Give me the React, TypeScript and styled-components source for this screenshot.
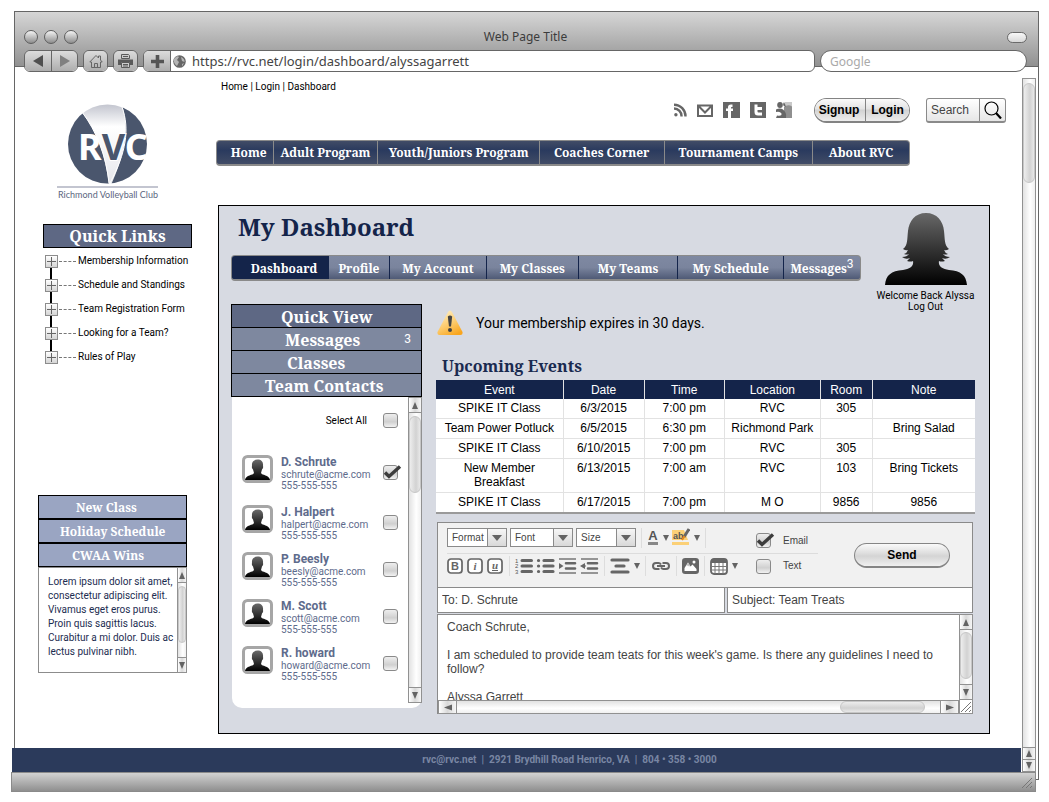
import React from "react";
import styled, { createGlobalStyle, css } from "styled-components";

const serif = `"Droid Serif", "Noto Serif", "DejaVu Serif Condensed", "DejaVu Serif", serif`;
const roboto = `Roboto, "Liberation Sans", sans-serif`;
const arial = `"Liberation Sans", Arial, sans-serif`;
const ui = `"Noto Sans", "DejaVu Sans", sans-serif`;

const GlobalStyle = createGlobalStyle`
  *, *::before, *::after { box-sizing: border-box; }
  body { margin: 0; background: #fff; color: #000; font: 10px/12px ${roboto}; }
  h1, h2, h3, p, ul, ol { margin: 0; padding: 0; }
  ul, ol { list-style: none; }
  a { color: inherit; text-decoration: none; }
  button, input, select, textarea { margin: 0; padding: 0; font: inherit; color: inherit; }
  button { cursor: pointer; }
  svg { display: block; flex: none; }
`;

/* ---------- browser window ---------- */

const Page = styled.div`
  padding: 11px 10px 10px 11px;
`;

const Window = styled.div`
  margin-left: 3px;
  border: 1px solid #666;
  padding-bottom: 7px;
`;

const Chrome = styled.header`
  height: 60px;
  display: flex;
  flex-direction: column;
  justify-content: space-between;
  padding-top: 16px;
  background:
    linear-gradient(#666, #666) 0 54px / 100% 1px no-repeat,
    linear-gradient(#d6d6d6, #919191) 0 0 / 100% 54px no-repeat;
`;

const TitleRow = styled.div`
  display: grid;
  grid-template-columns: 1fr auto 1fr;
  align-items: center;
  height: 16px;
  padding: 0 11px 0 9px;
  font: 12px/18px ${ui};
  color: #3c3c3c;
`;

const Lights = styled.div`
  display: flex;
  gap: 6px;
`;

const Light = styled.button`
  width: 14px;
  height: 14px;
  border: 1px solid #5e5e5e;
  border-radius: 50%;
  background: linear-gradient(#f4f4f4, #8d8d8d);
`;

const Pill = styled.button`
  justify-self: end;
  width: 20px;
  height: 11px;
  border: 1px solid #6a6a6a;
  border-radius: 6px;
  background: linear-gradient(#f8f8f8, #d8d8d8);
`;

const ToolRow = styled.div`
  display: flex;
  gap: 5px;
  padding: 0 11px 0 9px;
`;

const ChromeGroup = styled.div`
  display: flex;
  height: 22px;
  border: 1px solid #666;
  border-radius: 6px;
  overflow: hidden;
`;

const ChromeButton = styled.button<{ $divided?: boolean }>`
  display: grid;
  place-items: center;
  width: ${(p) => (p.$divided ? 26 : 23)}px;
  border: 0;
  background: linear-gradient(#dcdcdc, #adadad);
  & + & { border-left: 1px solid #666; }
`;

const AddressBar = styled(ChromeGroup)`
  flex: 1;
  background: #fff;
`;

const AddressLabel = styled.label`
  flex: 1;
  display: flex;
  align-items: center;
  gap: 6px;
  padding-left: 2px;
  border-left: 1px solid #666;
`;

const AddressInput = styled.input`
  flex: 1;
  border: 0;
  outline: 0;
  background: none;
  font: 13px/18px ${ui};
  color: #444;
`;

const GoogleInput = styled.input`
  width: 207px;
  height: 22px;
  border: 1px solid #666;
  border-radius: 11px;
  padding: 0 9px;
  outline: 0;
  font: 12px/18px ${ui};
  &::placeholder { color: #aaa; opacity: 1; }
`;

const Viewport = styled.div`
  display: flex;
  padding-right: 2px;
`;

const Site = styled.div`
  flex: 1;
  min-width: 0;
  display: flex;
  flex-direction: column;
`;

const SiteColumns = styled.div`
  display: flex;
`;

const Footer = styled.footer`
  position: relative;
  margin: 14px 1px 0 -3px;
  height: 24px;
  background: #2b3a5b;
  color: #7986a3;
  font: bold 10px/23px ${roboto};
  text-align: center;
  padding-left: 106px;
`;

const StatusBar = styled.div`
  position: relative;
  display: flex;
  justify-content: flex-end;
  align-items: flex-end;
  margin: -8px 3px 0 0;
  height: 20px;
  padding: 0 2px 2px 0;
  border: 1px solid #8a8a8a;
  background: linear-gradient(#d2d2d2, #8f8f8f);
`;

/* ---------- scroll bars ---------- */

const Bar = styled.div<{ $row?: boolean; $size: number }>`
  flex: none;
  display: flex;
  flex-direction: ${(p) => (p.$row ? "row" : "column")};
  ${(p) => (p.$row ? "height" : "width")}: ${(p) => p.$size}px;
  border: 1px solid #919191;
  background: linear-gradient(${(p) => (p.$row ? "180deg" : "90deg")}, #e2e2e2, #fff 60%, #f0f0f0);
`;

const BarButton = styled.button<{ $row?: boolean }>`
  flex: none;
  display: grid;
  place-items: center;
  ${(p) => (p.$row ? "width" : "height")}: ${(p) => (p.$row ? 18 : 15)}px;
  border: 0 solid #919191;
  background: linear-gradient(90deg, #fff, #d9d9d9 50%, #f6f6f6);
  ${(p) => (p.$row
    ? css`&:first-child { border-right-width: 1px; } &:last-child { border-left-width: 1px; }`
    : css`&:first-child { border-bottom-width: 1px; } &:last-child { border-top-width: 1px; }`)}
`;

const Track = styled.div<{ $row?: boolean; $end?: boolean; $pad: number }>`
  flex: 1;
  display: flex;
  flex-direction: ${(p) => (p.$row ? "row" : "column")};
  justify-content: ${(p) => (p.$end ? "flex-end" : "flex-start")};
  ${(p) => (p.$row ? `padding: 0 ${p.$pad}px` : `padding: ${p.$pad}px 0`)};
`;

const Thumb = styled.div<{ $row?: boolean; $length: number }>`
  ${(p) => (p.$row ? "width" : "height")}: ${(p) => p.$length}px;
  ${(p) => (p.$row ? "align-self: stretch" : "width: 100%")};
  border: 1px solid #c6c6c6;
  border-radius: 7px;
  background: linear-gradient(${(p) => (p.$row ? "180deg" : "90deg")}, #ededed, #d2d2d2 60%, #e8e8e8);
`;

const arrows = {
  up: "M4 1 7 8H1Z",
  down: "M4 8 1 1H7Z",
  left: "M0 4.5 8 1.500V7.500Z",
  right: "M8 4.500 0 1.500V7.500Z",
};

const Arrow = ({ to }: { to: keyof typeof arrows }) => (
  <svg width="8" height="9" viewBox="0 0 8 9" aria-hidden="true">
    <path d={arrows[to]} fill="#636363" />
  </svg>
);

const VerticalBar = ({ size = 14, pad = 3, thumb }: { size?: number; pad?: number; thumb: number }) => (
  <Bar $size={size}>
    <BarButton type="button" aria-label="Scroll up"><Arrow to="up" /></BarButton>
    <Track $pad={pad}><Thumb $length={thumb} /></Track>
    <BarButton type="button" aria-label="Scroll down"><Arrow to="down" /></BarButton>
  </Bar>
);

const PageBar = styled(Bar)`
  margin-top: 6px;
`;

const PageBarButton = styled(BarButton)`
  height: 12px;
  border-top-width: 1px;
`;

const Grip = () => (
  <svg width="12" height="12" viewBox="0 0 12 12" stroke="#777" aria-hidden="true">
    <path d="M1 11 11 1M5 11 11 5M9 11l2-2" />
  </svg>
);

/* ---------- sidebar ---------- */

const Sidebar = styled.aside`
  flex: none;
  width: 201px;
  padding: 31px 0 0 23px;
`;

const LogoLink = styled.a`
  display: block;
  margin-left: 17px;
`;

const QuickTitle = styled.h2`
  margin: 20px 0 0 5px;
  width: 149px;
  border: 1px solid #000;
  background: #5e6884;
  color: #fff;
  font: bold 16px/22px ${serif};
  text-align: center;
`;

const Tree = styled.ul`
  margin: 1px 0 0 7px;
  background: linear-gradient(#000, #000) 5px 12px / 2px calc(100% - 24px) no-repeat;
`;

const TreeItem = styled.li`
  display: flex;
  align-items: center;
  height: 24px;
`;

const Expand = styled.button`
  display: grid;
  place-items: center;
  width: 13px;
  height: 13px;
  border: 1px solid #8c8c8c;
  background: linear-gradient(#fff, #d5d5d5);
`;

const Dash = styled.span`
  width: 17px;
  margin: 0 2px 0 1px;
  border-top: 1px dashed #777;
`;

const News = styled.section`
  width: 149px;
  margin-top: 126px;
`;

const NewsTab = styled.button<{ $inset: number }>`
  display: block;
  width: 100%;
  height: 24px;
  border: 1px solid #000;
  background: #9aa5c2;
  color: #fff;
  padding: 1px 0 0 ${(p) => p.$inset}px;
  font: bold 12px/21px ${serif};
  text-align: left;
`;

const NewsBox = styled.div`
  display: flex;
  height: 106px;
  border: 1px solid #8c8c8c;
`;

const NewsText = styled.p`
  flex: 1;
  padding: 7px 0 0 9px;
  font: 10px/14px ${roboto};
  color: #1c2c50;
  white-space: pre;
`;

const NewsBar = styled.div`
  display: flex;
  margin: -1px -1px -1px 0;
`;

/* ---------- site header ---------- */

const Main = styled.main`
  flex: 1;
  min-width: 0;
  padding-top: 9px;
`;

const Breadcrumb = styled.nav`
  margin-left: 5px;
`;

const Utilities = styled.div`
  display: flex;
  justify-content: flex-end;
  align-items: center;
  gap: 16px;
  height: 26px;
  margin-top: 4px;
  padding-right: 16px;
`;

const Social = styled.div`
  display: flex;
  align-items: center;
  gap: 10px;
  margin-right: 5px;
`;

const Account = styled.div`
  display: flex;
  height: 25px;
  border: 1px solid #838383;
  border-bottom-width: 2px;
  border-radius: 13px;
  overflow: hidden;
`;

const AccountButton = styled.button`
  width: 50px;
  padding-right: 2px;
  border: 0;
  background: linear-gradient(#fafafa, #e3e3e3 45%, #d2d2d2 50%, #ededed);
  font: bold 12px/20px ${arial};
  & + & { width: 44px; padding: 0; border-left: 1px solid #838383; }
`;

const Search = styled.form`
  display: flex;
  width: 80px;
  height: 25px;
  border: 1px solid #8a8a8a;
  border-bottom-width: 2px;
  border-radius: 3px;
  background: linear-gradient(#fff, #e6e6e6);
`;

const SearchInput = styled.input`
  flex: 1;
  min-width: 0;
  border: 0;
  padding-left: 4px;
  background: none;
  font: 12px/20px ${arial};
  &::placeholder { color: #444; opacity: 1; }
`;

const SearchButton = styled.button`
  display: grid;
  place-items: center;
  width: 26px;
  border: 0;
  border-left: 1px solid #8a8a8a;
  background: none;
`;

const Nav = styled.nav`
  display: flex;
  height: 26px;
  margin: 17px 112px 0 0;
  border: 1px solid #8a8a8a;
  border-bottom-width: 2px;
  border-radius: 4px;
  background: linear-gradient(#414c66, #2a3a5e 40%, #414c66);
`;

const NavLink = styled.a<{ $grow: number }>`
  flex: ${(p) => p.$grow} 1 0;
  color: #fff;
  font: bold 12px/23px ${serif};
  text-align: center;
  white-space: nowrap;
  & + & { border-left: 1px solid #8a8a8a; }
  &:first-child { padding-left: 8px; }
`;

/* ---------- dashboard ---------- */

const Panel = styled.section`
  margin: 39px 32px 0 2px;
  padding: 6px 14px 19px 12px;
  border: 1px solid #000;
  background: #d7dae2;
`;

const PanelHead = styled.div`
  display: flex;
  gap: 15px;
`;

const PanelHeadMain = styled.div`
  flex: 1;
  min-width: 0;
`;

const PageTitle = styled.h1`
  margin-left: 7px;
  color: #14244a;
  font: bold 24px/30px ${serif};
`;

const Tabs = styled.nav`
  display: flex;
  height: 26px;
  margin-top: 13px;
  border: 1px solid #8a8a8a;
  border-bottom-width: 2px;
  border-radius: 4px;
  overflow: hidden;
  background: linear-gradient(#7f89a2, #7a849d 50%, #4f5a76);
`;

const Tab = styled.a<{ $grow: number; $active?: boolean }>`
  flex: ${(p) => p.$grow} 1 0;
  color: #fff;
  font: bold 12px/25px ${serif};
  text-align: center;
  white-space: nowrap;
  background: ${(p) => (p.$active ? "#14244a" : "none")};
  & + & { border-left: 1px solid #14244a; }
  &:first-child { padding-left: 8px; }
`;

const Count = styled.sup`
  font: 12px/12px ${roboto};
  vertical-align: 5px;
`;

const User = styled.div`
  width: 99px;
  text-align: center;
  font: 10px/11px ${roboto};
  white-space: nowrap;
  svg { margin: 0 auto 5px; }
  a { display: block; }
`;

const PanelBody = styled.div`
  display: flex;
  align-items: flex-start;
  gap: 14px;
  margin-top: -8px;
`;

const QuickView = styled.section`
  flex: none;
  width: 191px;
`;

const QuickRow = styled.a<{ $head?: boolean; $inset: number }>`
  display: flex;
  justify-content: space-between;
  height: 24px;
  margin-bottom: -1px;
  padding: 0 10px 0 ${(p) => p.$inset}px;
  border: 1px solid #000;
  background: ${(p) => (p.$head ? "#5e6884" : "#7e889f")};
  color: #fff;
  font: bold 16px/24px ${serif};
`;

const QuickCount = styled.span`
  font: 12px/23px ${roboto};
`;

const Contacts = styled.div`
  display: flex;
  align-items: flex-start;
  justify-content: space-between;
  margin: 1px 0 0 1px;
  height: 311px;
  border-radius: 0 0 10px 10px;
  background: #fff;
`;

const ContactList = styled.div`
  flex: 1;
  padding: 16px 10px 0 10px;
`;

const ContactsBar = styled.div`
  display: flex;
  height: 306px;
`;

const SelectAll = styled.label`
  display: flex;
  justify-content: flex-end;
  align-items: center;
  gap: 16px;
  height: 15px;
  margin-bottom: 27px;
`;

const Contact = styled.label`
  display: grid;
  grid-template-columns: 31px 1fr 15px;
  column-gap: 8px;
  align-items: start;
  height: 47px;
  color: #5e6b8c;
  font: 10px/11px ${roboto};
  &:nth-of-type(2) { margin-bottom: 3px; }
`;

const ContactText = styled.span`
  display: block;
  white-space: nowrap;
`;

const ContactName = styled.strong`
  display: block;
  font: bold 12px/14px ${roboto};
`;

const ContactCheck = styled.span`
  padding-top: 10px;
`;

const Check = styled.input`
  appearance: none;
  display: block;
  width: 15px;
  height: 15px;
  border: 1px solid #8a8a8a;
  border-radius: 3px;
  background: linear-gradient(#eee, #d0d0d0 60%, #f2f2f2);
`;

const CheckBox = styled.span`
  display: grid;
  width: 15px;
  height: 15px;
  & > * { grid-area: 1 / 1; }
  svg { overflow: visible; pointer-events: none; }
`;

const Details = styled.div`
  flex: 1;
  min-width: 0;
  padding-top: 5px;
`;

const Notice = styled.p`
  display: flex;
  align-items: center;
  gap: 13px;
  height: 28px;
  padding-left: 1px;
  font: 14px/18px ${roboto};
`;

const EventsTitle = styled.h2`
  margin: 19px 0 4px 6px;
  color: #1a2a50;
  font: bold 16px/20px ${serif};
`;

const Events = styled.table`
  width: 100%;
  border-collapse: collapse;
  table-layout: fixed;
  background: #fff;
  border-bottom: 2px solid #9a9a9a;
  font: 12px/14px ${arial};
  text-align: center;
  th { background: #14244a; color: #fff; font-weight: normal; height: 19px; padding: 0; border-left: 1px solid #e2e2e2; }
  td { padding: 2px 2px 3px; border-left: 1px solid #e2e2e2; border-bottom: 1px solid #e2e2e2; vertical-align: top; white-space: pre-line; }
  td:first-child, th:first-child { border-left: 0; }
`;

/* ---------- message editor ---------- */

const Editor = styled.form`
  margin: 8px 2px 0 1px;
  color: #444;
  font: 12px/14px ${arial};
`;

const EditorTools = styled.div`
  display: flex;
  align-items: center;
  height: 66px;
  padding: 0 22px 0 9px;
  border: 1px solid #8a8a8a;
  background: #f1f1f1;
`;

const ToolLines = styled.div`
  flex: 0 0 371px;
  margin-bottom: 4px;
`;

const ToolLine = styled.div<{ $top?: boolean }>`
  display: flex;
  align-items: ${(p) => (p.$top ? "flex-start" : "center")};
  gap: 3px;
  height: 25px;
  & + & { border-top: 1px solid #dcdcdc; }
`;

const Divider = styled.span`
  width: 1px;
  height: 20px;
  margin: 0 2px;
  background: #ddd;
`;

const Picker = styled.span<{ $width: number }>`
  display: grid;
  grid-template-columns: 1fr 19px;
  align-items: center;
  width: ${(p) => p.$width}px;
  height: 19px;
  border: 1px solid #8a8a8a;
  background: linear-gradient(#f6f6f6, #d8d8d8);
  svg { grid-area: 1 / 2; justify-self: center; pointer-events: none; }
`;

const PickerSelect = styled.select`
  grid-area: 1 / 1 / 2 / 3;
  appearance: none;
  height: 17px;
  border: 0;
  outline: 0;
  padding-left: 4px;
  background:
    linear-gradient(#8a8a8a, #8a8a8a) calc(100% - 18px) 0 / 1px 100% no-repeat,
    linear-gradient(#fff, #fff) 0 0 / calc(100% - 19px) 100% no-repeat;
  font: 10px/17px ${arial};
`;

const Tool = styled.button`
  display: flex;
  align-items: center;
  gap: 4px;
  border: 0;
  background: none;
`;

const Via = styled.label`
  display: flex;
  align-items: center;
  align-self: center;
  gap: 12px;
  width: 62px;
  margin-left: auto;
  font: 10px/14px ${arial};
`;

const Send = styled.button`
  width: 96px;
  height: 25px;
  margin-left: auto;
  border: 1px solid #858585;
  border-bottom-width: 2px;
  border-radius: 13px;
  background: linear-gradient(#fafafa, #dcdcdc 45%, #d4d4d4 55%, #f0f0f0);
  color: #000;
  font: bold 12px/20px ${arial};
`;

const Fields = styled.div`
  display: flex;
  gap: 2px;
  margin: -1px 0 1px;
`;

const Field = styled.input<{ $grow: number }>`
  flex: ${(p) => p.$grow} 1 0;
  min-width: 0;
  height: 26px;
  padding: 0 4px;
  border: 1px solid #8a8a8a;
  background: #fff;
`;

const Message = styled.div`
  display: grid;
  grid-template-columns: 1fr 14px;
  grid-template-rows: 86px 14px;
  border: 1px solid #8a8a8a;
  border-width: 0 0 0 1px;
  background: #fff;
`;

const MessageText = styled.textarea`
  resize: none;
  overflow: hidden;
  border: 0;
  border-top: 1px solid #8a8a8a;
  outline: 0;
  padding: 5px 9px 0;
  background: none;
`;

const Corner = styled.div`
  display: grid;
  place-items: center;
  border: 1px solid #919191;
  border-top: 0;
`;

/* ---------- drawings ---------- */

const Logo = () => (
  <svg width="106" height="101" viewBox="0 0 106 101" role="img" aria-label="Richmond Volleyball Club">
    <defs>
      <linearGradient id="ball" x1="0" y1="0" x2="0" y2="1">
        <stop offset="0" stopColor="#c3c5cf" />
        <stop offset=".28" stopColor="#fff" />
        <stop offset="1" stopColor="#e6e7ec" />
      </linearGradient>
      <clipPath id="ballClip"><circle cx="52.500" cy="41" r="39.500" /></clipPath>
    </defs>
    <circle cx="52.500" cy="41" r="39.500" fill="url(#ball)" />
    <g clipPath="url(#ballClip)" fill="#4a566d">
      <path d="M26 8C40 26 50 48 54 82L0 84V0H22Z" />
      <path d="M67 2C74 24 72 46 56 82L100 84V0Z" />
    </g>
    <path d="M27 9C42 29 51 53 54 80M67 4C75 26 71 50 55 80" fill="none" stroke="#fff" />
    <text x="23" y="57" fontFamily="Noto Sans, sans-serif" fontWeight="bold" fontSize="36" fill="#fff">
      R<tspan fill="#4a566d" stroke="#fff" strokeWidth="2" paintOrder="stroke">V</tspan>C
    </text>
    <path d="M2 84H103" stroke="#c3c5d0" strokeWidth="2" />
    <text x="53" y="95" textAnchor="middle" fontFamily="Lato, sans-serif" fontSize="9" fill="#5b6680">Richmond Volleyball Club</text>
  </svg>
);

const Woman = () => (
  <svg width="84" height="73" viewBox="0 0 84 73" role="img" aria-label="Alyssa">
    <defs>
      <linearGradient id="woman" x1="0" y1="0" x2="0" y2="1">
        <stop offset="0" stopColor="#686868" />
        <stop offset="1" stopColor="#000" />
      </linearGradient>
    </defs>
    <path
      fill="url(#woman)"
      d="M42 1C53 1 59 9 60 19C61 27 60 33 65 37Q62 39 60 38Q61 41 64 42Q61 43 59 42Q61 45 66 45Q62 48 58 46L61 49Q57 50 55 49C54 54 58 57 65 58C77 59 82 63 83 73H1C2 63 7 59 19 58C26 57 30 54 29 49Q27 50 23 49L26 46Q22 48 18 45Q23 45 25 42Q23 43 20 42Q23 41 24 38Q22 39 19 37C24 33 23 27 24 19C25 9 31 1 42 1Z"
    />
  </svg>
);

const Avatar = () => (
  <svg width="31" height="28" viewBox="0 0 31 28" aria-hidden="true">
    <defs>
      <linearGradient id="man" x1="0" y1="0" x2="0" y2="1">
        <stop offset="0" stopColor="#6a6a6a" />
        <stop offset="1" stopColor="#000" />
      </linearGradient>
    </defs>
    <rect x="1.500" y="1.500" width="28" height="25" rx="4" fill="#fff" stroke="#a6a6a6" strokeWidth="3" />
    <path fill="url(#man)" d="M15.500 4.500C19.500 4.500 21.500 7 21 11C21.500 13 20.500 14 20 14.500L19 18C20 20.500 27 19.500 28 25H3C4 19.500 11 20.500 12 18L11 14.500C10.500 14 9.500 13 10 11C9.500 7 11.500 4.500 15.500 4.500Z" />
  </svg>
);

const Tick = () => (
  <svg width="15" height="15" viewBox="0 0 15 15" aria-hidden="true">
    <path d="M2 7.500 6 11.500 17 1.500" fill="none" stroke="#3d3d3d" strokeWidth="3.400" />
  </svg>
);

const Warning = () => (
  <svg width="26" height="26" viewBox="0 0 26 26" aria-hidden="true">
    <defs>
      <linearGradient id="warn" x1=".2" y1="0" x2=".7" y2="1">
        <stop offset="0" stopColor="#fff0c4" />
        <stop offset=".6" stopColor="#fcc866" />
        <stop offset="1" stopColor="#f9a51d" />
      </linearGradient>
    </defs>
    <path d="M11 2Q13 -1 15 2L25.500 22Q26 25 23.500 25H2.500Q0 25 .5 22Z" fill="url(#warn)" />
    <path d="M10.800 6.500Q13 4.500 15.200 6.500L14 16.500H12Z" fill="#444" />
    <circle cx="13" cy="20" r="2" fill="#444" />
  </svg>
);

const SmallArrow = ({ width = 6 }: { width?: number }) => (
  <svg width={width} height="6" viewBox="0 0 10 10" preserveAspectRatio="none" aria-hidden="true">
    <path d="M0 0H10L5 10Z" fill="#636363" />
  </svg>
);

const socialIcons: { name: string; width: number; art: React.ReactNode }[] = [
  {
    name: "News feed",
    width: 13,
    art: (
      <g fill="none" stroke="#666" strokeWidth="2.400">
        <path d="M0 6.500A7.500 7.500 0 0 1 7.500 14.500M0 2.700A11.500 11.500 0 0 1 11.500 14.500" />
        <circle cx="1.900" cy="12.800" r="1.700" fill="#666" stroke="none" />
      </g>
    ),
  },
  {
    name: "E-mail",
    width: 16,
    art: <path d="M1 3.500H15V14H1ZM2 4.500 8 10.500 14 4.500" fill="none" stroke="#666" strokeWidth="2" />,
  },
  {
    name: "Facebook",
    width: 17,
    art: (
      <>
        <path d="M0 0H17V16H0Z" fill="#666" />
        <path d="M3 6.500H5V5Q5 2.500 8 2.500H9.500V5H8.500Q8 5 8 6V6.500H10V9H8V16H5V9H3Z" fill="#fff" />
      </>
    ),
  },
  {
    name: "Twitter",
    width: 16,
    art: (
      <>
        <path d="M0 0H16V16H0Z" fill="#666" />
        <path d="M4.500 2.500H7.500V5H12V8H7.500V9.500Q7.500 10.500 8.500 10.500H12V13.500H8Q4.500 13.500 4.500 10Z" fill="#fff" />
      </>
    ),
  },
  {
    name: "Google",
    width: 17,
    art: (
      <>
        <path d="M9 0H16V5H9Z" fill="#c9c9c9" />
        <path d="M8 5Q12 2 16 4.500V16H8Z" fill="#8f8f8f" />
        <ellipse cx="4" cy="3" rx="2.800" ry="3" fill="#666" />
        <path d="M8 0Q5.500 4 10 5L9 2ZM0 7.500Q4 5.500 7 7.500Q11 10.500 10 16H0L1 13.500Q6 14.500 5.500 11.500Q4 9 0 10Z" fill="#666" />
      </>
    ),
  },
];

const BoxLetter = ({ children, italic, underline }: { children: string; italic?: boolean; underline?: boolean }) => (
  <svg width="17" height="16" viewBox="0 0 17 16" aria-hidden="true">
    <rect x="1" y="1" width="14" height="14" rx="3" fill="#fff" stroke="#666" strokeWidth="1.700" />
    <text
      x="8"
      y={underline ? 11 : 12}
      textAnchor="middle"
      fontFamily={italic ? "Liberation Serif, serif" : "Liberation Sans, sans-serif"}
      fontStyle={italic ? "italic" : "normal"}
      fontWeight="bold"
      fontSize="11"
      fill="#666"
    >
      {children}
    </text>
    {underline && <path d="M5 12.500H11" stroke="#666" />}
  </svg>
);

const OrderedIcon = () => (
  <svg width="18" height="16" viewBox="0 0 18 16" aria-hidden="true">
    <path d="M7 2.500H16.500M7 8H16.500M7 13.500H16.500" stroke="#666" strokeWidth="3" strokeLinecap="round" />
    <g fontFamily="Liberation Sans, sans-serif" fontSize="6" fill="#555">
      <text x="0" y="5">1</text>
      <text x="0" y="10">2</text>
      <text x="0" y="16">3</text>
    </g>
  </svg>
);

const UnorderedIcon = () => (
  <svg width="19" height="16" viewBox="0 0 19 16" aria-hidden="true">
    <path d="M8 2.500H17M8 8H17M8 13.500H17M2.500 2.500h.1M2.500 8h.1M2.500 13.500h.1" stroke="#666" strokeWidth="3.200" strokeLinecap="round" />
  </svg>
);

const IndentIcon = ({ back }: { back?: boolean }) => (
  <svg width="19" height="16" viewBox="0 0 19 16" aria-hidden="true">
    <path d="M1 1H18M1 15H18" stroke="#777" strokeWidth="1.300" />
    <path d="M8 5.300H17M8 10.500H17" stroke="#666" strokeWidth="2.600" strokeLinecap="round" />
    <path d={back ? "M5 5V11L0 8ZM5 7.500H6V8.500H5Z" : "M1 5V11L5.500 8Z"} fill="#666" />
  </svg>
);

const AlignIcon = () => (
  <svg width="20" height="16" viewBox="0 0 20 16" aria-hidden="true">
    <path d="M2 2H18M6 8H14M2 14H18" stroke="#666" strokeWidth="3.200" strokeLinecap="round" />
  </svg>
);

const ChainIcon = () => (
  <svg width="20" height="16" viewBox="0 0 20 16" aria-hidden="true">
    <path d="M8.500 11H5A3 3 0 0 1 5 5H7.500Q9 5 10 6.500M11.500 5H15A3 3 0 0 1 15 11H12.500Q11 11 10 9.500M6 8H14" fill="none" stroke="#666" strokeWidth="2" />
  </svg>
);

const PictureIcon = () => (
  <svg width="17" height="16" viewBox="0 0 17 16" aria-hidden="true">
    <rect x=".8" y=".8" width="15.400" height="14.400" rx="2.500" fill="#666" stroke="#666" strokeWidth="1.600" />
    <path d="M2.500 13V10L6 4.500 8.500 8.500 10.500 6.500 14.500 11V13Z" fill="#fff" />
    <circle cx="12" cy="4" r="1.500" fill="#fff" />
    <path d="M6 4.500 8 8 7 8.500 6 7.500 4.500 8Z" fill="#bbb" />
  </svg>
);

const TableIcon = () => (
  <svg width="18" height="17" viewBox="0 0 18 17" aria-hidden="true">
    <rect x="1" y="1" width="16" height="15" rx="3" fill="#fff" stroke="#666" strokeWidth="1.800" />
    <path d="M1 1.500H17V5H1Z" fill="#666" />
    <path d="M1 8.500H17M1 12H17M5 5V16M9 5V16M13 5V16" stroke="#777" />
  </svg>
);

const InkIcon = () => (
  <svg width="12" height="19" viewBox="0 -2 12 19" aria-hidden="true">
    <text x="6" y="10" textAnchor="middle" fontFamily="Liberation Sans, sans-serif" fontWeight="bold" fontSize="13" fill="#555">A</text>
    <path d="M1 13.500H11" stroke="#888" strokeWidth="3" />
  </svg>
);

const MarkerIcon = () => (
  <svg width="18" height="19" viewBox="0 -2 18 19" aria-hidden="true">
    <path d="M0 0H12L16 10H0ZM0 12H17V15H0Z" fill="#fbd077" />
    <text x="1" y="9" fontFamily="Liberation Sans, sans-serif" fontWeight="bold" fontSize="9" fill="#555">ab</text>
    <path d="M17 -1 12 7" stroke="#666" strokeWidth="3" />
    <path d="M12.500 6 10 10" stroke="#e58a1a" strokeWidth="2" />
  </svg>
);

/* ---------- data ---------- */

const quickLinks = ["Membership Information", "Schedule and Standings", "Team Registration Form", "Looking for a Team?", "Rules of Play"];

const newsTabs: [string, number][] = [["New Class", 37], ["Holiday Schedule", 21], ["CWAA Wins", 33]];

const navItems: [string, number][] = [
  ["Home", 48], ["Adult Program", 105], ["Youth/Juniors Program", 162],
  ["Coaches Corner", 125], ["Tournament Camps", 149], ["About RVC", 97],
];

const tabs: [string, number][] = [
  ["Dashboard", 89], ["Profile", 61], ["My Account", 97], ["My Classes", 92],
  ["My Teams", 100], ["My Schedule", 106], ["Messages", 77],
];

const contacts = [
  { name: "D. Schrute", mail: "schrute@acme.com", on: true },
  { name: "J. Halpert", mail: "halpert@acme.com" },
  { name: "P. Beesly", mail: "beesly@acme.com" },
  { name: "M. Scott", mail: "scott@acme.com" },
  { name: "R. howard", mail: "howard@acme.com" },
];

const columns: [string, string][] = [
  ["Event", "23.6%"], ["Date", "15%"], ["Time", "14.900%"], ["Location", "17.800%"], ["Room", "9.600%"], ["Note", "19.100%"],
];

const events = [
  ["SPIKE IT Class", "6/3/2015", "7:00 pm", "RVC", "305", ""],
  ["Team Power Potluck", "6/5/2015", "6:30 pm", "Richmond Park", "", "Bring Salad"],
  ["SPIKE IT Class", "6/10/2015", "7:00 pm", "RVC", "305", ""],
  ["New Member\nBreakfast", "6/13/2015", "7:00 am", "RVC", "103", "Bring Tickets"],
  ["SPIKE IT Class", "6/17/2015", "7:00 pm", "M O", "9856", "9856"],
];

const newsBody = `Lorem ipsum dolor sit amet,
consectetur adipiscing elit.
Vivamus eget eros purus.
Proin quis sagittis lacus.
Curabitur a mi dolor. Duis ac
lectus pulvinar nibh.`;

const messageBody = `Coach Schrute,

I am scheduled to provide team teats for this week's game. Is there any guidelines I need to follow?

Alyssa Garrett`;

const CheckMark = ({ on, id }: { on?: boolean; id: string }) => {
  const [checked, setChecked] = React.useState(!!on);
  return (
    <CheckBox>
      <Check type="checkbox" id={id} checked={checked} onChange={(e) => setChecked(e.target.checked)} />
      {checked && <Tick />}
    </CheckBox>
  );
};

const Choice = ({ label, width }: { label: string; width: number }) => (
  <Picker $width={width}>
    <PickerSelect aria-label={label}><option>{label}</option></PickerSelect>
    <SmallArrow width={10} />
  </Picker>
);

export default function App() {
  return (
    <Page>
      <GlobalStyle />
      <Window>
        <Chrome>
          <TitleRow>
            <Lights>
              <Light aria-label="Close" /><Light aria-label="Minimize" /><Light aria-label="Zoom" />
            </Lights>
            <span>Web Page Title</span>
            <Pill aria-label="Toggle toolbar" />
          </TitleRow>
          <ToolRow>
            <ChromeGroup>
              <ChromeButton $divided aria-label="Back">
                <svg width="10" height="12" viewBox="0 0 10 12"><path d="M10 0V12L0 6Z" fill="#4f4f4f" /></svg>
              </ChromeButton>
              <ChromeButton $divided aria-label="Forward">
                <svg width="10" height="12" viewBox="0 0 10 12"><path d="M0 0V12L10 6Z" fill="#808080" /></svg>
              </ChromeButton>
            </ChromeGroup>
            <ChromeGroup>
              <ChromeButton aria-label="Home page">
                <svg width="14" height="14" viewBox="0 0 14 14" fill="none" stroke="#666">
                  <path d="M.8 8 7 1.500 9.500 4V2H11.500V6L13.200 8H11.500V13.500H2.500V8ZM5.500 13.500V9.500H8.500V13.500" />
                </svg>
              </ChromeButton>
            </ChromeGroup>
            <ChromeGroup>
              <ChromeButton aria-label="Print">
                <svg width="15" height="14" viewBox="0 0 15 14" fill="#5a5a5a">
                  <path d="M0 5.500H15V11H12V8.500H3V11H0Z" />
                  <path d="M3.500 .5H10.500L11.500 1.500V4.500H3.500ZM3.500 8.500H11.500V13.500H3.500ZM5 10.500H10M5 12H10M5 2.500H10" fill="#ccc" stroke="#5a5a5a" />
                </svg>
              </ChromeButton>
            </ChromeGroup>
            <AddressBar>
              <ChromeButton $divided aria-label="Add bookmark">
                <svg width="13" height="13" viewBox="0 0 13 13"><path d="M6.500 0V13M0 6.500H13" stroke="#555" strokeWidth="3.600" /></svg>
              </ChromeButton>
              <AddressLabel>
                <svg width="13" height="13" viewBox="0 0 13 13" aria-hidden="true">
                  <circle cx="6.500" cy="6.500" r="6.300" fill="#666" />
                  <path d="M1 4Q4 0 6 2L4 5 6 7 4 11Q0 8 1 4ZM8 2Q12 4 11.500 7L9 6ZM9 9 11 8 9 11.500Z" fill="#b5b5b5" />
                </svg>
                <AddressInput aria-label="Address" defaultValue="https://rvc.net/login/dashboard/alyssagarrett" />
              </AddressLabel>
            </AddressBar>
            <GoogleInput aria-label="Google search" placeholder="Google" />
          </ToolRow>
        </Chrome>

        <Viewport>
          <Site>
            <SiteColumns>
              <Sidebar>
                <LogoLink href="#"><Logo /></LogoLink>
                <QuickTitle>Quick Links</QuickTitle>
                <Tree>
                  {quickLinks.map((text) => (
                    <TreeItem key={text}>
                      <Expand aria-label={`Expand ${text}`}>
                        <svg width="9" height="9" viewBox="0 0 9 9"><path d="M4.500 0V9M0 4.500H9" stroke="#666" /></svg>
                      </Expand>
                      <Dash />
                      <a href="#">{text}</a>
                    </TreeItem>
                  ))}
                </Tree>
                <News>
                  {newsTabs.map(([text, inset]) => <NewsTab key={text} $inset={inset}>{text}</NewsTab>)}
                  <NewsBox>
                    <NewsText>{newsBody}</NewsText>
                    <NewsBar><VerticalBar size={10} thumb={57} /></NewsBar>
                  </NewsBox>
                </News>
              </Sidebar>

              <Main>
                <Breadcrumb>
                  <a href="#">Home</a> | <a href="#">Login</a> | <a href="#">Dashboard</a>
                </Breadcrumb>
                <Utilities>
                  <Social>
                    {socialIcons.map(({ name, width, art }) => (
                      <a href="#" key={name} aria-label={name}>
                        <svg width={width} height="16" viewBox={`0 0 ${width} 16`}>{art}</svg>
                      </a>
                    ))}
                  </Social>
                  <Account>
                    <AccountButton>Signup</AccountButton>
                    <AccountButton>Login</AccountButton>
                  </Account>
                  <Search>
                    <SearchInput aria-label="Search" placeholder="Search" />
                    <SearchButton type="button" aria-label="Run search">
                      <svg width="18" height="18" viewBox="0 0 18 18" fill="none" stroke="#000">
                        <circle cx="7.500" cy="7.500" r="6.500" strokeWidth="1.200" />
                        <path d="M12 12 17 17.500" strokeWidth="2.200" />
                      </svg>
                    </SearchButton>
                  </Search>
                </Utilities>
                <Nav>
                  {navItems.map(([text, grow]) => <NavLink href="#" key={text} $grow={grow}>{text}</NavLink>)}
                </Nav>

                <Panel>
                  <PanelHead>
                    <PanelHeadMain>
                      <PageTitle>My Dashboard</PageTitle>
                      <Tabs>
                        {tabs.map(([text, grow], i) => (
                          <Tab href="#" key={text} $grow={grow} $active={i === 0}>
                            {text}{text === "Messages" && <Count>3</Count>}
                          </Tab>
                        ))}
                      </Tabs>
                    </PanelHeadMain>
                    <User>
                      <Woman />
                      Welcome Back Alyssa
                      <a href="#">Log Out</a>
                    </User>
                  </PanelHead>

                  <PanelBody>
                    <QuickView>
                      <QuickRow href="#" $head $inset={49}>Quick View</QuickRow>
                      <QuickRow href="#" $inset={53}>Messages<QuickCount>3</QuickCount></QuickRow>
                      <QuickRow href="#" $inset={55}>Classes</QuickRow>
                      <QuickRow href="#" $inset={33}>Team Contacts</QuickRow>
                      <Contacts>
                        <ContactList>
                          <SelectAll htmlFor="all">Select All<CheckMark id="all" /></SelectAll>
                          {contacts.map(({ name, mail, on }) => (
                            <Contact key={name} htmlFor={name}>
                              <Avatar />
                              <ContactText>
                                <ContactName>{name}</ContactName>
                                {mail}<br />555-555-555
                              </ContactText>
                              <ContactCheck><CheckMark id={name} on={on} /></ContactCheck>
                            </Contact>
                          ))}
                        </ContactList>
                        <ContactsBar><VerticalBar thumb={77} /></ContactsBar>
                      </Contacts>
                    </QuickView>

                    <Details>
                      <Notice><Warning />Your membership expires in 30 days.</Notice>
                      <EventsTitle>Upcoming Events</EventsTitle>
                      <Events>
                        <colgroup>
                          {columns.map(([name, width]) => <col key={name} width={width} />)}
                        </colgroup>
                        <thead>
                          <tr>{columns.map(([name]) => <th key={name} scope="col">{name}</th>)}</tr>
                        </thead>
                        <tbody>
                          {events.map((row, r) => (
                            <tr key={r}>
                              {row.map((cell, c) => <td key={c}>{cell}</td>)}
                            </tr>
                          ))}
                        </tbody>
                      </Events>

                      <Editor>
                        <EditorTools>
                          <ToolLines>
                            <ToolLine $top>
                              <Choice label="Format" width={60} />
                              <Choice label="Font" width={63} />
                              <Choice label="Size" width={60} />
                              <Divider />
                              <Tool type="button" aria-label="Text colour"><InkIcon /><SmallArrow /></Tool>
                              <Tool type="button" aria-label="Highlight"><MarkerIcon /><SmallArrow /></Tool>
                              <Divider />
                              <Via htmlFor="email"><CheckMark id="email" on />Email</Via>
                            </ToolLine>
                            <ToolLine>
                              <Tool type="button" aria-label="Bold"><BoxLetter>B</BoxLetter></Tool>
                              <Tool type="button" aria-label="Italic"><BoxLetter italic>i</BoxLetter></Tool>
                              <Tool type="button" aria-label="Underline"><BoxLetter italic underline>u</BoxLetter></Tool>
                              <Divider />
                              <Tool type="button" aria-label="Numbered list"><OrderedIcon /></Tool>
                              <Tool type="button" aria-label="Bulleted list"><UnorderedIcon /></Tool>
                              <Tool type="button" aria-label="Indent"><IndentIcon /></Tool>
                              <Tool type="button" aria-label="Outdent"><IndentIcon back /></Tool>
                              <Divider />
                              <Tool type="button" aria-label="Alignment"><AlignIcon /><SmallArrow /></Tool>
                              <Divider />
                              <Tool type="button" aria-label="Link"><ChainIcon /></Tool>
                              <Divider />
                              <Tool type="button" aria-label="Picture"><PictureIcon /></Tool>
                              <Divider />
                              <Tool type="button" aria-label="Table"><TableIcon /><SmallArrow /></Tool>
                              <Via htmlFor="text"><CheckMark id="text" />Text</Via>
                            </ToolLine>
                          </ToolLines>
                          <Send type="button">Send</Send>
                        </EditorTools>
                        <Fields>
                          <Field $grow={278} aria-label="To" defaultValue="To: D. Schrute" />
                          <Field $grow={236} aria-label="Subject" defaultValue="Subject: Team Treats" />
                        </Fields>
                        <Message>
                          <MessageText aria-label="Message" defaultValue={messageBody} />
                          <VerticalBar thumb={47} pad={2} />
                          <Bar $row $size={14}>
                            <BarButton $row type="button" aria-label="Scroll left"><Arrow to="left" /></BarButton>
                            <Track $row $end $pad={15}><Thumb $row $length={85} /></Track>
                            <BarButton $row type="button" aria-label="Scroll right"><Arrow to="right" /></BarButton>
                          </Bar>
                          <Corner><Grip /></Corner>
                        </Message>
                      </Editor>
                    </Details>
                  </PanelBody>
                </Panel>
              </Main>
            </SiteColumns>
            <Footer>rvc@rvc.net &nbsp;|&nbsp; 2921 Brydhill Road Henrico, VA &nbsp;|&nbsp; 804 • 358 • 3000</Footer>
          </Site>
          <PageBar $size={14}>
            <Track $pad={4}><Thumb $length={100} /></Track>
            <PageBarButton aria-label="Scroll page up"><Arrow to="up" /></PageBarButton>
            <PageBarButton aria-label="Scroll page down"><Arrow to="down" /></PageBarButton>
          </PageBar>
        </Viewport>
      </Window>
      <StatusBar><Grip /></StatusBar>
    </Page>
  );
}
